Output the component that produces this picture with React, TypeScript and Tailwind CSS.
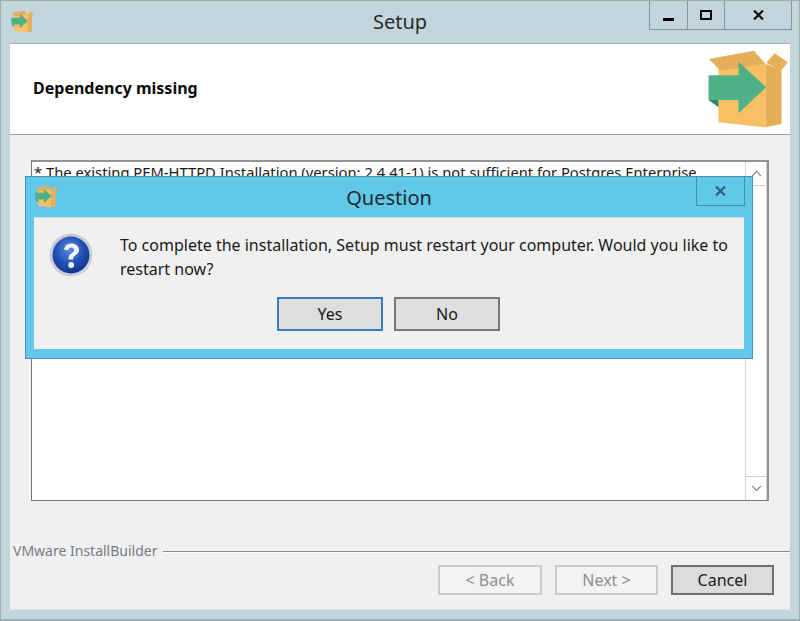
const BoxIcon = ({ className }: { className: string }) => (
  <svg viewBox="260 145 245 240" className={className}>
    <polygon points="294,205 435,190 435,380 294,365" fill="#f8c063" />
    <polygon points="435,190 483,205 483,370 435,380" fill="#e6ae58" />
    <polygon points="265,175 400,150 435,190 300,210" fill="#e6ae58" />
    <polygon points="437,187 462,158 502,185 483,208" fill="#e6ae58" />
    <polygon points="264,298 294,298 294,320" fill="#2f8a6a" />
    <polygon points="264,224 354,224 354,183 437,260 354,338 354,298 264,298" fill="#50b189" />
  </svg>
);

const QuestionIcon = () => (
  <svg viewBox="0 0 44 44" className="w-11 h-11 shrink-0">
    <defs>
      <radialGradient id="q" cx="45%" cy="35%" r="70%">
        <stop offset="0%" stopColor="#5f8ee0" />
        <stop offset="55%" stopColor="#1f4fb4" />
        <stop offset="100%" stopColor="#12308a" />
      </radialGradient>
    </defs>
    <circle cx="22" cy="22" r="21.5" fill="#c9ced6" />
    <circle cx="22" cy="22" r="18.5" fill="url(#q)" />
    <path d="M15 16.5c.8-4 3.8-6 7.5-6 4.300 0 7.500 2.600 7.500 6.300 0 3-1.800 4.500-3.700 5.800-1.600 1.100-2.300 1.900-2.300 3.900h-4.500c0-3.300 1-4.800 3-6.200 1.500-1 2.500-1.800 2.500-3.300 0-1.600-1.100-2.600-2.700-2.600-1.700 0-2.700 1-3.100 2.800z" fill="#f4f6fb" />
    <circle cx="22.200" cy="32" r="2.900" fill="#f4f6fb" />
  </svg>
);

const sans = "font-['Noto_Sans','Open_Sans',sans-serif]";

const WizardButton = ({ label, disabled, strong, wide }: { label: string; disabled?: boolean; strong?: boolean; wide?: boolean }) => (
  <div
    className={`${wide ? "w-[104px]" : "w-[103px]"} h-[30px] flex items-center justify-center border-2 text-[16px] ${
      disabled
        ? "border-[#c8cccd] bg-[#f3f3f3] text-[#8f8f8f]"
        : strong
          ? "border-[#6f6f6f] bg-[#dcdcdc] text-[#1a1a1a]"
          : ""
    }`}
  >
    {label}
  </div>
);

export default function App() {
  return (
    <div className={`relative w-[800px] h-[621px] overflow-hidden flex flex-col bg-[#c2d5dc] border-t border-x border-b-2 border-[#a3acaf] text-[#1a1a1a] ${sans}`}>
      {/* Title bar */}
      <div className="relative h-[42px] shrink-0 flex items-start px-[10px]">
        <BoxIcon className="w-[23px] h-[23px] mt-[9px]" />
        <div className="absolute inset-x-0 top-[7px] text-center text-[20px] leading-[28px] text-[#2b2b2b]">Setup</div>
        <div className="absolute top-[-1px] left-[648px] w-[143px] h-[30px] flex border border-[#84969c] text-[#111]">
          <div className="w-[38px] border-r border-[#84969c] flex items-center justify-center">
            <div className="w-[11px] h-[3px] bg-black mt-[8px]" />
          </div>
          <div className="w-[37px] border-r border-[#84969c] flex items-center justify-center">
            <div className="w-[12px] h-[10px] border-2 border-black" />
          </div>
          <div className="flex-1 flex items-center justify-center">
            <svg viewBox="0 0 11 10" className="w-[11px] h-[10px]"><path d="M1 .5l9 9M10 .5l-9 9" stroke="#111" strokeWidth="2.200" /></svg>
          </div>
        </div>
      </div>

      {/* Client area */}
      <div className="flex-1 mx-[9px] mb-[9px] flex flex-col bg-[#f0f0f0] border-t border-b border-t-[#9fb0b6] border-b-[#dfe3e4] min-h-0">
        <div className="relative h-[91px] shrink-0 bg-white border-b border-[#a0a0a0] flex items-center pl-[23px]">
          <div className="font-bold text-[16px] text-[#0a0a0a] mt-[-2px]">Dependency missing</div>
          <BoxIcon className="absolute left-[697px] top-[5px] w-[82px] h-[80px]" />
        </div>

        <div className="flex-1 pt-[25px] pl-[21px] pr-[21px] min-h-0">
          <div className="h-[341px] border-2 border-[#8f939a] border-l border-b border-l-[#6f7780] border-b-[#6f7780] bg-white flex overflow-hidden">
            <div className="flex-1 pl-[2px] text-[14.75px] leading-[20px] whitespace-nowrap overflow-hidden">
              * The existing PEM-HTTPD Installation (version: 2.4.41-1) is not sufficient for Postgres Enterprise
            </div>
            <div className="w-[22px] flex flex-col justify-between bg-white border-x border-[#d4d4d4]">
              <div className="h-[24px] flex items-center justify-center border-b border-[#cfcfcf]">
                <svg viewBox="0 0 12 8" className="w-[11px] h-[7px]"><path d="M1 7l5-5.500 5 5.500" fill="none" stroke="#7a7a7a" strokeWidth="1.200" /></svg>
              </div>
              <div className="h-[24px] flex items-center justify-center border-t border-[#cfcfcf]">
                <svg viewBox="0 0 12 8" className="w-[11px] h-[7px]"><path d="M1 1l5 5.500 5-5.500" fill="none" stroke="#7a7a7a" strokeWidth="1.200" /></svg>
              </div>
            </div>
          </div>
        </div>

        <div className="h-[58px] shrink-0 relative">
          <div className="flex items-center pl-[3px] h-[20px] mt-[-10px]">
            <span className="text-[14px] text-[#7b7b85] leading-[20px]">VMware InstallBuilder</span>
            <div className="flex-1 ml-[5px] border-t border-[#8e8e8e] border-b-0 shadow-[0_1px_0_#ffffff]" />
          </div>
          <div className="flex justify-end gap-[13px] pr-[16px] mt-[4px]">
            <WizardButton label="< Back" disabled wide />
            <WizardButton label="Next >" disabled />
            <WizardButton label="Cancel" strong />
          </div>
        </div>
      </div>

      {/* Question dialog */}
      <div className="absolute left-[24px] top-[175px] w-[728px] h-[183px] bg-[#62c8ea] border border-[#4b90a8] flex flex-col">
        <div className="relative h-[40px] shrink-0 flex items-start pl-[9px]">
          <BoxIcon className="w-[23px] h-[23px] mt-[8px]" />
          <div className="absolute inset-x-0 top-[7px] text-center text-[20px] leading-[28px] text-[#1f2a2e]">Question</div>
          <div className="absolute left-[670px] top-[-1px] w-[49px] h-[30px] border border-[#4b8ea5] flex items-center justify-center">
            <svg viewBox="0 0 11 10" className="w-[11px] h-[10px]"><path d="M1 .5l9 9M10 .5l-9 9" stroke="#2f6478" strokeWidth="2.200" /></svg>
          </div>
        </div>
        <div className="mx-[8px] h-[132px] bg-[#f0f0f0] border-t border-[#c8dde4] flex flex-col">
          <div className="flex gap-[27px] pl-[15px] pt-[15px]">
            <QuestionIcon />
            <div className="text-[16px] leading-[24px] w-[620px] text-[#1a1a1a]">
              To complete the installation, Setup must restart your computer. Would you like to restart now?
            </div>
          </div>
          <div className="flex gap-[11px] pl-[243px] mt-[16px]">
            <div className="w-[106px] h-[34px] flex items-center justify-center border-2 border-[#3a7db8] bg-[#dedede] text-[16px]">Yes</div>
            <div className="w-[106px] h-[34px] flex items-center justify-center border-2 border-[#777777] bg-[#dedede] text-[16px]">No</div>
          </div>
        </div>
      </div>
    </div>
  );
}
